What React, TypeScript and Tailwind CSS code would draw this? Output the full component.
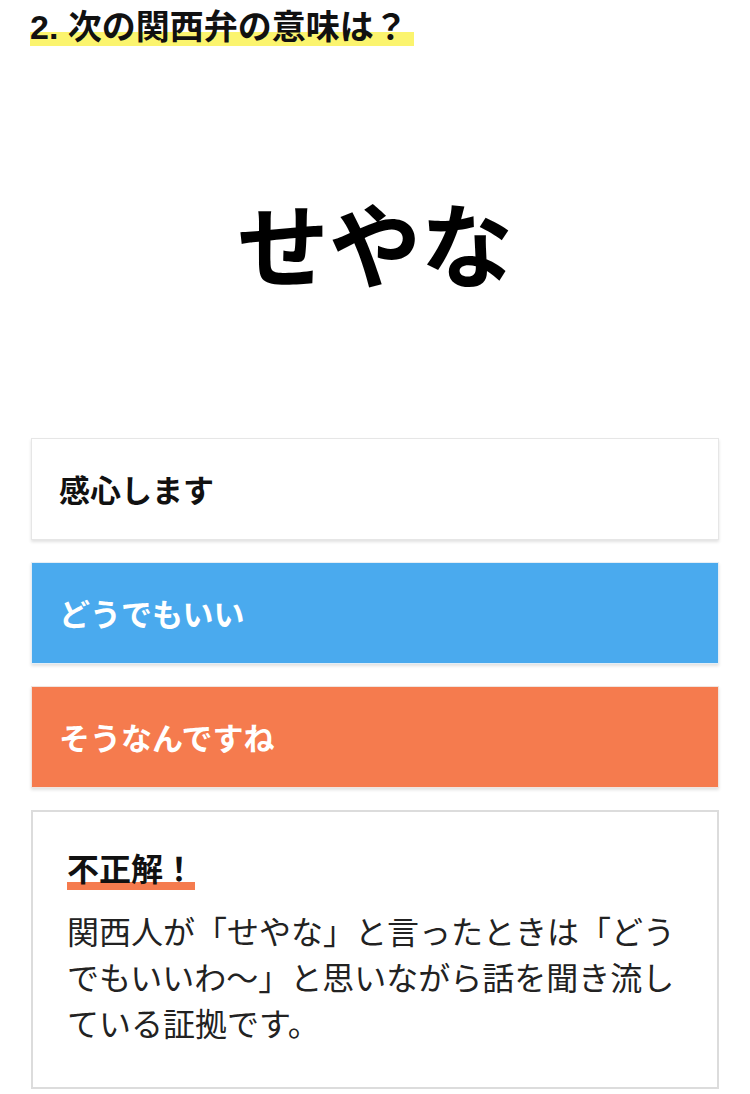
const font = {
  fontFamily: '"Noto Sans CJK JP", "Noto Sans", sans-serif',
};

const headingFont = {
  fontFamily: '"Liberation Sans", "Noto Sans CJK JP", sans-serif',
};

const choices = [
  { label: '感心します', tone: 'bg-white text-[#111] border-[#e6e6e6]' },
  { label: 'どうでもいい', tone: 'bg-[#4aaaee] text-white border-[#e4eef6]' },
  { label: 'そうなんですね', tone: 'bg-[#f57b4e] text-white border-[#f0e4df]' },
];

export default function App() {
  return (
    <div className="w-[750px] min-h-[1094px] bg-white px-[31px]" style={font}>
      {/* question title with marker highlight */}
      <h2 className="pt-[4px] text-[34px] leading-[46px] font-bold text-[#111] -ml-px" style={headingFont}>
        <span className="bg-[linear-gradient(transparent_64%,#fbf46e_64%)] pr-[6px]">
          2. 次の関西弁の意味は？
        </span>
      </h2>

      <div className="mt-[145px] text-center text-[92px] leading-[92px] font-bold text-black">
        せやな
      </div>

      <div className="mt-[151px] flex flex-col gap-[22px]">
        {choices.map((c) => (
          <div
            key={c.label}
            className={`h-[102px] flex items-center pl-[27px] border text-[31px] font-bold shadow-[0_2px_3px_rgba(0,0,0,0.12)] ${c.tone}`}
          >
            {c.label}
          </div>
        ))}

        <div className="h-[279px] border-2 border-[#dcdcdc] pl-[34px] pr-[30px] pt-[33px]">
          <div className="text-[32px] leading-[44px] font-bold text-[#111]">
            <span className="bg-[linear-gradient(transparent_82%,#f57b4e_82%)]">不正解！</span>
          </div>
          <p className="mt-[18px] text-[32px] leading-[46px] text-[#222]">
            関西人が「せやな」と言ったときは「どうでもいいわ〜」と思いながら話を聞き流している証拠です。
          </p>
        </div>
      </div>
    </div>
  );
}
